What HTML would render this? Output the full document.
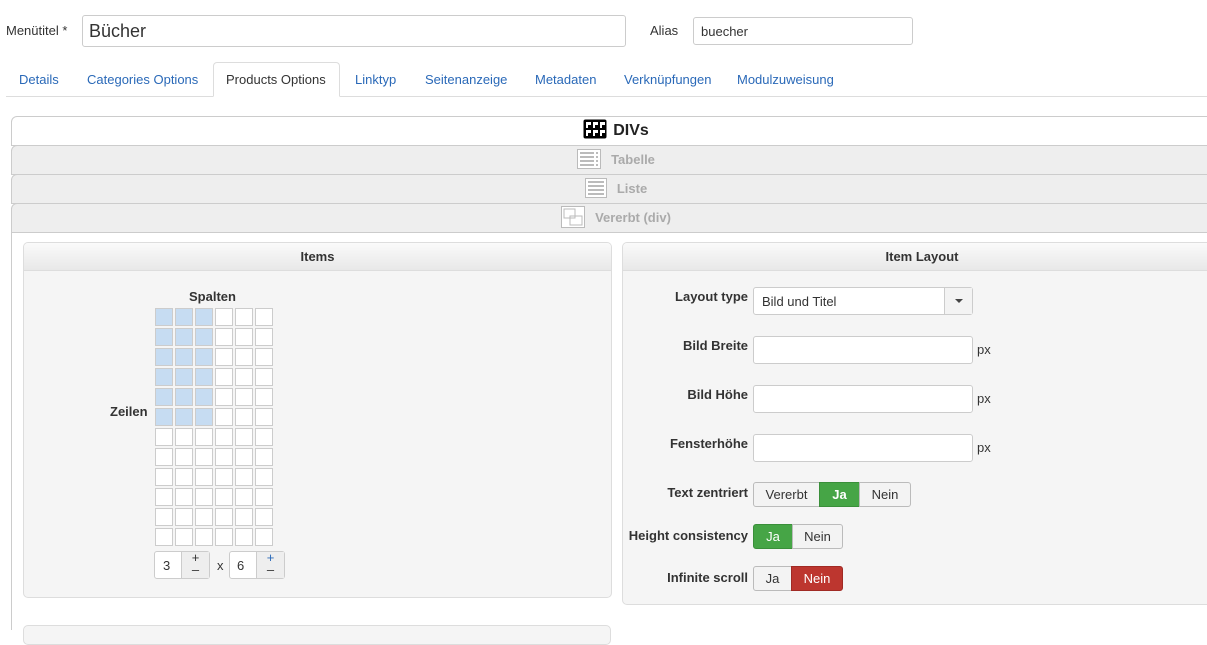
<!DOCTYPE html>
<html><head><meta charset="utf-8"><style>
*{box-sizing:border-box;margin:0;padding:0}
body{width:1207px;height:628px;overflow:hidden;background:#fff;font-family:"Liberation Sans",Arial,sans-serif;font-size:13px;color:#333;position:relative}
.a{position:absolute}
.inp{position:absolute;background:#fff;border:1px solid #ccc;border-radius:3px}
.tab{position:absolute;top:72px;color:#2a69b8;font-size:13px}
.acc{position:absolute;left:11px;width:1210px;height:30px;border:1px solid #ccc;border-radius:6px 0 0 0;text-align:center;font-weight:bold;font-size:13px;color:#aaa;line-height:28px;background:#eee}
.panel{position:absolute;background:#f5f5f5;border:1px solid #ddd;border-radius:5px;overflow:hidden}
.ph{height:28px;background:linear-gradient(#fafafa,#e8e8e8);border-bottom:1px solid #ddd;text-align:center;font-weight:bold;line-height:27px;color:#333}
.lbl{position:absolute;right:459px;font-weight:bold;text-align:right;white-space:nowrap}
.cell{position:absolute;width:18px;height:18px;border:1px solid #ccc;background:#fff}
.cell.s{background:#c6dcf2}
.btn{position:absolute;border:1px solid #bbb;text-align:center;background:#f3f3f3;color:#333}
.g{background:#46a546;color:#fff;border-color:#3a8f3a}
.r{background:#bd362f;color:#fff;border-color:#a02a24}
</style></head><body>
<div class="a" style="left:6px;top:23px">Menütitel *</div>
<div class="inp" style="left:82px;top:15px;width:544px;height:32px;font-size:18px;padding:5px 6px">Bücher</div>
<div class="a" style="left:650px;top:23px">Alias</div>
<div class="inp" style="left:693px;top:17px;width:220px;height:28px;padding:6px 7px">buecher</div>

<div class="a" style="left:6px;top:96px;width:1201px;border-top:1px solid #ddd"></div>
<div class="a" style="left:213px;top:62px;width:127px;height:35px;border:1px solid #ddd;border-bottom:1px solid #fff;border-radius:4px 4px 0 0;background:#fff"></div>
<div class="tab" style="left:19px">Details</div>
<div class="tab" style="left:87px">Categories Options</div>
<div class="tab" style="left:226px;color:#333">Products Options</div>
<div class="tab" style="left:355px">Linktyp</div>
<div class="tab" style="left:425px">Seitenanzeige</div>
<div class="tab" style="left:535px">Metadaten</div>
<div class="tab" style="left:624px">Verknüpfungen</div>
<div class="tab" style="left:737px">Modulzuweisung</div>

<div class="a" style="left:11px;top:230px;height:400px;border-left:1px solid #ccc"></div>
<div class="acc" style="top:116px;background:#fff;color:#222;font-size:16px">
<svg width="24" height="20" style="vertical-align:-4px;margin-right:6px" viewBox="0 0 24 20"><rect x="0.5" y="0.5" width="23" height="19" rx="2" fill="#000"/><g fill="#fff"><rect x="3" y="3" width="5" height="6"/><rect x="10" y="3" width="5" height="6"/><rect x="17" y="3" width="5" height="6"/><rect x="3" y="11" width="5" height="6"/><rect x="10" y="11" width="5" height="6"/><rect x="17" y="11" width="5" height="6"/></g><g fill="#000"><rect x="5" y="6" width="3" height="3"/><rect x="12" y="6" width="3" height="3"/><rect x="19" y="6" width="3" height="3"/><rect x="5" y="14" width="3" height="3"/><rect x="12" y="14" width="3" height="3"/><rect x="19" y="14" width="3" height="3"/></g></svg>DIVs</div>
<div class="acc" style="top:145px"><svg width="24" height="20" style="vertical-align:-5px;margin-right:10px" viewBox="0 0 24 20"><rect x="0.5" y="0.5" width="23" height="19" fill="#fff" stroke="#bbb"/><g stroke="#bbb" stroke-width="2"><path d="M3 4h14M3 8h14M3 12h14M3 16h14M19 4h2M19 8h2M19 12h2M19 16h2"/></g></svg>Tabelle</div>
<div class="acc" style="top:174px"><svg width="22" height="20" style="vertical-align:-5px;margin-right:10px" viewBox="0 0 22 20"><rect x="0.5" y="0.5" width="21" height="19" fill="#fff" stroke="#bbb"/><g stroke="#bbb" stroke-width="2"><path d="M3 4h16M3 8h16M3 12h16M3 16h16"/></g></svg>Liste</div>
<div class="acc" style="top:203px"><svg width="24" height="22" style="vertical-align:-6px;margin-right:10px" viewBox="0 0 24 22"><rect x="0.5" y="0.5" width="23" height="21" fill="#fff" stroke="#bbb"/><rect x="3" y="3" width="11" height="9" fill="none" stroke="#bbb"/><rect x="9" y="10" width="12" height="9" fill="none" stroke="#bbb"/></svg>Vererbt (div)</div>

<div class="panel" style="left:23px;top:242px;width:589px;height:356px"><div class="ph">Items</div></div>
<div class="a" style="left:189px;top:289px;font-weight:bold">Spalten</div>
<div class="a" style="left:110px;top:404px;font-weight:bold">Zeilen</div>
<div class="btn" style="left:154px;top:551px;width:56px;height:28px;background:#fff;border-color:#ccc;border-radius:3px"></div>
<div class="a" style="left:163px;top:558px">3</div>
<div class="a" style="left:181px;top:552px;width:28px;height:26px;background:#eee;border-left:1px solid #ccc;text-align:center;line-height:12px;font-size:13px">+<br>–</div>
<div class="a" style="left:217px;top:558px">x</div>
<div class="btn" style="left:229px;top:551px;width:56px;height:28px;background:#fff;border-color:#ccc;border-radius:3px"></div>
<div class="a" style="left:237px;top:558px">6</div>
<div class="a" style="left:256px;top:552px;width:28px;height:26px;background:#eee;border-left:1px solid #ccc;text-align:center;line-height:12px;font-size:13px;color:#2a69b8">+<br><span style="color:#333">–</span></div>
<div class="panel" style="left:23px;top:625px;width:588px;height:20px"></div>

<div class="panel" style="left:622px;top:242px;width:600px;height:363px"><div class="ph">Item Layout</div></div>
<div class="lbl" style="top:289px">Layout type</div>
<div class="inp" style="left:753px;top:287px;width:220px;height:28px;padding:6px 8px">Bild und Titel</div>
<div class="a" style="left:944px;top:288px;width:28px;height:26px;background:#f3f3f3;border-left:1px solid #ccc"><div style="margin:11px auto 0;width:0;height:0;border:4px solid transparent;border-top-color:#444;border-bottom:0"></div></div>
<div class="lbl" style="top:338px">Bild Breite</div>
<div class="inp" style="left:753px;top:336px;width:220px;height:28px"></div><div class="a" style="left:977px;top:342px">px</div>
<div class="lbl" style="top:387px">Bild Höhe</div>
<div class="inp" style="left:753px;top:385px;width:220px;height:28px"></div><div class="a" style="left:977px;top:391px">px</div>
<div class="lbl" style="top:436px">Fensterhöhe</div>
<div class="inp" style="left:753px;top:434px;width:220px;height:28px"></div><div class="a" style="left:977px;top:440px">px</div>
<div class="lbl" style="top:485px">Text zentriert</div>
<div class="btn" style="left:753px;top:482px;width:67px;height:25px;line-height:23px;border-radius:3px 0 0 3px">Vererbt</div>
<div class="btn g" style="left:819px;top:482px;width:41px;height:25px;line-height:23px;font-weight:bold">Ja</div>
<div class="btn" style="left:859px;top:482px;width:52px;height:25px;line-height:23px;border-radius:0 3px 3px 0">Nein</div>
<div class="lbl" style="top:528px">Height consistency</div>
<div class="btn g" style="left:753px;top:524px;width:40px;height:25px;line-height:23px;border-radius:3px 0 0 3px">Ja</div>
<div class="btn" style="left:792px;top:524px;width:51px;height:25px;line-height:23px;border-radius:0 3px 3px 0">Nein</div>
<div class="lbl" style="top:570px">Infinite scroll</div>
<div class="btn" style="left:753px;top:566px;width:39px;height:25px;line-height:23px;border-radius:3px 0 0 3px">Ja</div>
<div class="btn r" style="left:791px;top:566px;width:52px;height:25px;line-height:23px;border-radius:0 3px 3px 0">Nein</div>

<div id="g" style="position:absolute;left:0;top:0">
<script>
var h='';for(var r=0;r<12;r++)for(var c=0;c<6;c++){h+='<div class="cell'+(r<6&&c<3?' s':'')+'" style="left:'+(155+c*20)+'px;top:'+(308+r*20)+'px"></div>';}
document.getElementById('g').innerHTML=h;
</script></div>
</body></html>
